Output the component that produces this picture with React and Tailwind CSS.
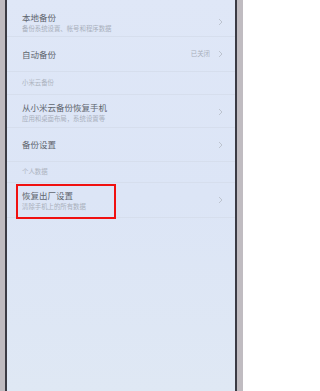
import React from 'react';

const Chevron = () => (
  <svg width="5" height="8" viewBox="0 0 5 8" className="shrink-0">
    <path d="M1 1 L4 4 L1 7" fill="none" stroke="#b9bfcb" strokeWidth="0.9" />
  </svg>
);

const Row = ({ title, sub, value, height, className = '', children }) => (
  <div
    className={`relative flex items-center pl-[15px] pr-[12px] border-b border-[#d6deed] ${className}`}
    style={{ height }}
  >
    <div className="flex-1 flex flex-col">
      <div className="text-[8.5px] leading-[11px] text-[#60656e]">{title}</div>
      {sub && <div className="text-[6.4px] leading-[9px] mt-[1px] text-[#a9b0bc]">{sub}</div>}
    </div>
    {value && <span className="text-[6.4px] text-[#a9b0bc] mr-[8px]">{value}</span>}
    <Chevron />
    {children}
  </div>
);

const Section = ({ label, height }) => (
  <div
    className="flex items-center pl-[15px] border-b border-[#d6deed] text-[6.4px] text-[#adb4c0]"
    style={{ height }}
  >
    {label}
  </div>
);

export default function App() {
  return (
    <div
      className="flex w-[243px] h-[391px] overflow-hidden bg-[#c3bfc4]"
      style={{ fontFamily: '"Noto Sans CJK SC", "Noto Sans", sans-serif' }}
    >
      <div className="w-[5px] bg-[#bfbbc0]" />
      <div className="w-[2px] bg-[#3b3b44]" />
      <div className="flex-1 flex flex-col bg-gradient-to-b from-[#dfe7f7] via-[#dce5f6] to-[#dfe8f4]">
        <Row title="本地备份" sub="备份系统设置、帐号和程序数据" height={37} className="pt-[8px]" />
        <Row title="自动备份" value="已关闭" height={35} />
        <Section label="小米云备份" height={23} />
        <Row title="从小米云备份恢复手机" sub="应用和桌面布局，系统设置等" height={33} className="pt-[2px]" />
        <Row title="备份设置" height={34} />
        <Section label="个人数据" height={21} />
        <Row title="恢复出厂设置" sub="清除手机上的所有数据" height={35}>
          <div className="absolute left-[9px] top-[1px] w-[100px] h-[35px] border-2 border-[#f01010]" />
        </Row>
      </div>
      <div className="w-[2px] bg-[#3b3b44]" />
      <div className="w-[6px] bg-[#c0bcc1]" />
    </div>
  );
}
